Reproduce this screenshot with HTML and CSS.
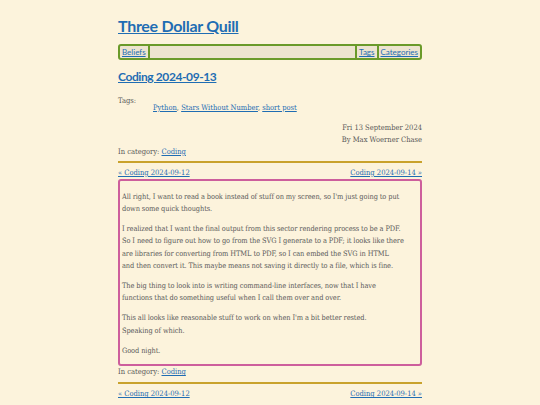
FILE: index.html
```html
<!DOCTYPE html>
<html>
<head>
<meta charset="utf-8">
<link rel="stylesheet" href="styles.css">
</head>
<body>
<div class="page">
  <header class="site-header">
    <a class="site-title" href="#">Three Dollar Quill</a>
    <nav class="nav">
      <a href="#" class="nav-item nav-left">Beliefs</a>
      <span class="nav-fill"></span>
      <a href="#" class="nav-item nav-right">Tags</a>
      <a href="#" class="nav-item nav-right">Categories</a>
    </nav>
  </header>
  <h1 class="post-title"><a href="#">Coding 2024-09-13</a></h1>
  <div class="tags">
    <div class="tags-label">Tags:</div>
    <div class="tags-list"><a href="#">Python</a>, <a href="#">Stars Without Number</a>, <a href="#">short post</a></div>
  </div>
  <div class="meta">
    <div>Fri 13 September 2024</div>
    <div>By Max Woerner Chase</div>
  </div>
  <div class="category">In category: <a href="#">Coding</a></div>
  <hr class="rule">
  <div class="pager"><a href="#">« Coding 2024-09-12</a><a href="#">Coding 2024-09-14 »</a></div>
  <article class="content">
    <p>All right, I want to read a book instead of stuff on my screen, so I'm just going to put<br>down some quick thoughts.</p>
    <p>I realized that I want the final output from this sector rendering process to be a PDF.<br>So I need to figure out how to go from the SVG I generate to a PDF; it looks like there<br>are libraries for converting from HTML to PDF, so I can embed the SVG in HTML<br>and then convert it. This maybe means not saving it directly to a file, which is fine.</p>
    <p>The big thing to look into is writing command-line interfaces, now that I have<br>functions that do something useful when I call them over and over.</p>
    <p>This all looks like reasonable stuff to work on when I'm a bit better rested.<br>Speaking of which.</p>
    <p>Good night.</p>
  </article>
  <div class="category">In category: <a href="#">Coding</a></div>
  <hr class="rule rule-bottom">
  <div class="pager"><a href="#">« Coding 2024-09-12</a><a href="#">Coding 2024-09-14 »</a></div>
</div>
</body>
</html>
```
FILE: styles.css
```css
html, body {
  margin: 0;
  padding: 0;
  background: #fcf3dc;
}
body {
  font-family: "DejaVu Serif Condensed", "DejaVu Serif", serif;
  font-stretch: condensed;
  font-size: 7.5px;
  color: #595959;
}
a {
  color: #1f6db3;
}
.page {
  width: 304px;
  margin: 0 auto;
  padding-top: 14px;
}
.site-header {
  display: flex;
  flex-direction: column;
}
.site-title {
  font-family: "Lato", sans-serif;
  font-stretch: normal;
  font-weight: 700;
  font-size: 16px;
  letter-spacing: -0.3px;
  line-height: 24px;
  align-self: flex-start;
}
.nav {
  margin-top: 6px;
  display: flex;
  border: 2px solid #6a9a2a;
  border-radius: 3px;
  background: #ede4cf;
  height: 12px;
  align-items: stretch;
  font-family: "Lato", sans-serif;
  font-stretch: normal;
  font-size: 8px;
  line-height: 12px;
}
.nav-item {
  padding: 0 2px;
}
.nav-left {
  border-right: 2px solid #6a9a2a;
}
.nav-right {
  border-left: 2px solid #6a9a2a;
}
.nav-fill {
  flex: 1;
}
.post-title {
  margin: 9px 0 0;
  font-family: "Lato", sans-serif;
  font-stretch: normal;
  font-size: 12px;
  letter-spacing: -0.4px;
  line-height: 16px;
  font-weight: 700;
}
.tags {
  margin-top: 11.5px;
  line-height: 7px;
}
.tags-list {
  padding-left: 35px;
}
.meta {
  margin-top: 11.5px;
  text-align: right;
  line-height: 12px;
}
.category {
  line-height: 12px;
}
.rule {
  margin: 3px 0 0;
  border: none;
  height: 2px;
  background: #c9a22c;
}
.rule-bottom {
  margin-top: 4px;
}
.pager {
  margin-top: 4px;
  display: flex;
  justify-content: space-between;
  line-height: 12px;
}
.content {
  border: 2px solid #cd5e9c;
  border-radius: 3px;
  padding: 2px 2px 0;
  line-height: 12.4px;
}
.content p {
  margin: 7.5px 0;
  font-size: 7.4px;
  letter-spacing: -0.1px;
}
```
